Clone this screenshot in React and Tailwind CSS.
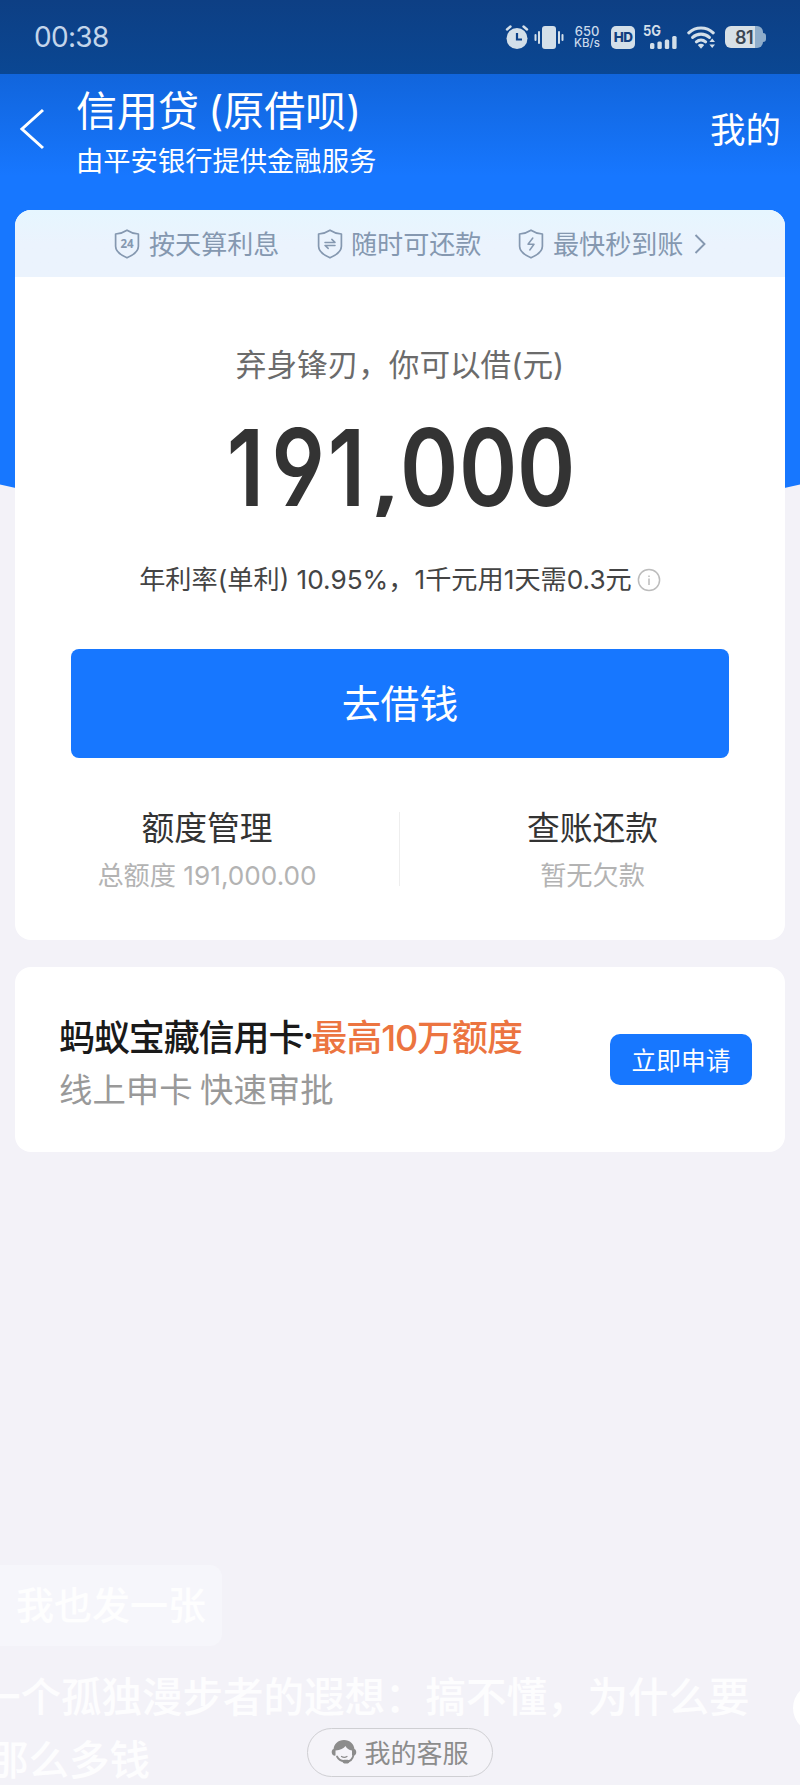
import React from "react";

function StatusBar() {
  return (
    <div className="flex h-[74px] items-center justify-between bg-gradient-to-b from-[#0d3f84] to-[#0a4793] pl-[34px] pr-[34px] font-['Inter','Noto_Sans_CJK_SC',sans-serif] text-[#c9d9ea]">
      <span className="text-[28px] leading-none tracking-[-0.7px] text-[#c3d5ea]">00:38</span>
      <div className="flex h-[26px] items-center">
        <svg width="24" height="25" viewBox="0 0 24 25">
          <circle cx="12" cy="13.5" r="10.5" fill="#d3dfe9" />
          <path d="M2 4.5 5.5 1.5M22 4.5 18.5 1.5" stroke="#d3dfe9" strokeWidth="2.4" strokeLinecap="round" />
          <path d="M12 8v6.5h5" fill="none" stroke="#0c4189" strokeWidth="2.2" />
        </svg>
        <svg className="ml-[5px]" width="30" height="25" viewBox="0 0 30 25">
          <rect x="8" y="1" width="14" height="23" rx="3" fill="#d3dfe9" />
          <path d="M5 7v11M25 7v11M1.5 10v5M28.5 10v5" stroke="#d3dfe9" strokeWidth="2" strokeLinecap="round" />
        </svg>
        <div className="ml-[9px] flex w-[28px] flex-col items-center text-[11.5px] font-medium leading-[12px]">
          <span className="text-[13px]">650</span>
          <span>KB/s</span>
        </div>
        <div className="ml-[10px] flex h-[23px] w-[24px] items-center justify-center rounded-[5px] bg-[#d3dfe9] text-[13.5px] font-extrabold tracking-[-0.6px] text-[#123f80]">
          HD
        </div>
        <svg className="ml-[8px] overflow-visible" width="35" height="26" viewBox="0 0 35 26">
          <text x="0" y="12" fontSize="14" fontWeight="700" fill="#d3dfe9" textLength="18" lengthAdjust="spacingAndGlyphs">5G</text>
          <g fill="#d3dfe9">
            <rect x="7" y="19" width="4.4" height="6" rx="1.5" />
            <rect x="14.4" y="17.5" width="4.4" height="7.5" rx="1.5" />
            <rect x="21.8" y="15.5" width="4.4" height="9.5" rx="1.5" />
            <rect x="29.2" y="12" width="4.4" height="13" rx="1.5" />
          </g>
        </svg>
        <svg className="ml-[9px]" width="29" height="24" viewBox="0 0 29 24">
          <g fill="none" stroke="#d3dfe9" strokeWidth="3.1" strokeLinecap="round">
            <path d="M1.8 7.8a18 18 0 0 1 24.4 0" />
            <path d="M5.6 12.4a12.4 12.4 0 0 1 16.8 0" />
            <path d="M9.4 16.8a7 7 0 0 1 9.2 0" />
          </g>
          <path d="M10.8 20a5 5 0 0 1 6.4 0L14 23.8z" fill="#d3dfe9" />
          <path d="m22.4 17 2.8-3.4 2.8 3.4zM22.4 19.6l2.8 3.4 2.8-3.4z" fill="#d3dfe9" />
        </svg>
        <div className="ml-[9px] flex h-[22px] w-[38px] items-center justify-center rounded-[6px] bg-gradient-to-r from-[#d7e0e6] from-80% to-[#8fadcb] to-80% text-[18px] font-semibold tracking-[-0.5px] text-[#3a4653]">
          81
        </div>
        <div className="h-[9px] w-[3px] rounded-r-[3px] bg-[#8fadcb]" />
      </div>
    </div>
  );
}

function Shield({ children }) {
  return (
    <svg width="26" height="30" viewBox="0 0 26 30" fill="none" stroke="#8598b0" strokeWidth="1.7" strokeLinejoin="round" strokeLinecap="round">
      <path d="M13 1.2C16 3.2 20 4.7 24.4 5v12.2c0 5.2-5 8.8-11.4 11.6C6.6 26 1.6 22.4 1.6 17.2V5C6 4.7 10 3.2 13 1.2Z" />
      {children}
    </svg>
  );
}

function Perks() {
  return (
    <div className="flex h-[67px] items-center rounded-t-[16px] bg-gradient-to-b from-[#e6f6ff] to-[#ebf3fd] to-50% pl-[99px] text-[26.1px] leading-none text-[#8598b0]">
      <Shield>
        <text x="13" y="18.6" textAnchor="middle" fontSize="11.5" fontWeight="700" fill="#8598b0" stroke="none" fontFamily="Open Sans, sans-serif">24</text>
      </Shield>
      <span className="ml-[9px] w-[131px] whitespace-nowrap">按天算利息</span>
      <span className="ml-[37px] flex">
        <Shield>
          <path d="M8 13.4h10l-3.2-3M18 16.4H8l3.2 3" strokeWidth="1.5" />
        </Shield>
      </span>
      <span className="ml-[8px] w-[131px] whitespace-nowrap">随时可还款</span>
      <span className="ml-[36px] flex">
        <Shield>
          <path d="M14.8 9 10 15.2h6L11.8 21" strokeWidth="1.5" />
        </Shield>
      </span>
      <span className="ml-[9px] w-[131px] whitespace-nowrap">最快秒到账</span>
      <svg className="ml-[10px]" width="12" height="20" viewBox="0 0 12 20" fill="none" stroke="#8598b0" strokeWidth="1.9">
        <path d="m1.5 1 9 9-9 9" />
      </svg>
    </div>
  );
}

function Glyph({ width, children }) {
  return (
    <span className={`flex justify-center ${width}`}>
      <span className="inline-block scale-x-[0.83]">{children}</span>
    </span>
  );
}

function Amount() {
  return (
    <div className="mt-[25px] flex h-[120px] items-baseline justify-center whitespace-nowrap font-['Inter'] text-[106.5px] font-semibold leading-[120px] text-[#333333] [font-feature-settings:'cv04']">
      <Glyph width="w-[42px]">1</Glyph>
      <Glyph width="w-[63px]">9</Glyph>
      <Glyph width="w-[34px]">1</Glyph>
      <span className="flex w-[37px] justify-center pl-[8px] font-['Open_Sans'] text-[86px] font-bold leading-none">,</span>
      <Glyph width="w-[58.5px]">0</Glyph>
      <Glyph width="w-[58.5px]">0</Glyph>
      <Glyph width="w-[58.5px]">0</Glyph>
    </div>
  );
}

function LoanCard() {
  return (
    <section className="flex h-[730px] flex-col items-center rounded-[16px] bg-white">
      <div className="w-full">
        <Perks />
      </div>
      <p className="mt-[66px] h-[40px] whitespace-nowrap text-[30.6px] leading-[40px] text-[#6b6b6b]">
        弃身锋刃，你可以借<span className="font-['Inter']">(</span>元<span className="font-['Inter']">)</span>
      </p>
      <Amount />
      <p className="mt-[34px] flex h-[36px] items-center whitespace-nowrap font-['Inter','Noto_Sans_CJK_SC',sans-serif] text-[26.2px] leading-[36px] text-[#444444]">
        年利率(单利) 10.95%，1千元用1天需0.3元
        <svg className="ml-[5px]" width="24" height="24" viewBox="0 0 24 24" fill="none" stroke="#bcbcbc" strokeWidth="1.5">
          <circle cx="12" cy="12" r="10.6" />
          <path d="M12 10.5v6.5M12 7.5v1.5" strokeWidth="1.5" />
        </svg>
      </p>
      <button className="mt-[51px] flex h-[109px] w-[658px] items-center justify-center rounded-[8px] bg-[#1777ff] pb-[4px] text-[38.8px] leading-none text-white">
        去借钱
      </button>
      <div className="mt-[46px] flex w-full items-stretch text-center">
        <div className="flex w-[384px] flex-col items-center">
          <h3 className="text-[32.8px] leading-[44px] text-[#333333]">额度管理</h3>
          <p className="mt-[10px] font-['Inter','Noto_Sans_CJK_SC',sans-serif] text-[26.2px] leading-[36px] text-[#b3b3b3]">
            总额度 191,000.00
          </p>
        </div>
        <div className="my-[8px] w-px bg-[#eeeeee]" />
        <div className="flex flex-1 flex-col items-center">
          <h3 className="text-[32.8px] leading-[44px] text-[#333333]">查账还款</h3>
          <p className="mt-[10px] font-['Inter','Noto_Sans_CJK_SC',sans-serif] text-[26.2px] leading-[36px] text-[#b3b3b3]">暂无欠款</p>
        </div>
      </div>
    </section>
  );
}

function CardPromo() {
  return (
    <section className="mt-[27px] flex h-[185px] items-center justify-between rounded-[16px] bg-white pl-[44px] pr-[33px]">
      <div className="whitespace-nowrap pt-[4px]">
        <h3 className="flex text-[36px] font-medium leading-[50px] tracking-[-1.1px] text-[#1a1a1a]">
          蚂蚁宝藏信用卡<span className="-ml-[1px] w-[9px] text-center font-['Inter'] font-bold tracking-normal">·</span>
          <span className="text-[#ec7440]">最高<span className="font-['Inter']">10</span>万额度</span>
        </h3>
        <p className="text-[33.4px] leading-[50px] text-[#999999]">线上申卡 快速审批</p>
      </div>
      <button className="flex h-[51px] w-[142px] items-center justify-center rounded-[10px] bg-[#1777ff] text-[24.7px] leading-none text-white">
        立即申请
      </button>
    </section>
  );
}

function AgentIcon() {
  return (
    <svg width="26" height="25" viewBox="0 0 26 25">
      <path d="M13 1C7 1 3 5 2.6 10 1 10.5.5 12 .8 14c.3 1.8 1.6 2.8 3.7 2.6V11.5c5-.3 8-2 10-4.5 1.2 2.5 3.5 4 6.5 4.5v5.1c2.5.2 4-1 4.200-2.700.2-1.900-.4-3.400-1.800-3.900C23 5 19 1 13 1Z" fill="#8c8c8c" />
      <path d="M6 17.5c1.5 3 4 4.5 7 4.5M22.5 16c-.8 4-3.5 6.5-7 6.8" fill="none" stroke="#8c8c8c" strokeWidth="1.8" strokeLinecap="round" />
      <rect x="11.5" y="20.8" width="7" height="3.6" rx="1.8" fill="#8c8c8c" />
      <path d="M10.5 17.5c1.5 1 4 1 5.5 0" fill="none" stroke="#8c8c8c" strokeWidth="1.2" strokeLinecap="round" />
    </svg>
  );
}

function ChatOverlay() {
  return (
    <div className="pointer-events-none absolute inset-x-0 top-[1565px] h-[220px] overflow-hidden font-medium text-white/85">
      <div className="flex h-[81px] w-[222px] items-center rounded-r-[12px] bg-[#f6f6fb] pb-[6px] pl-[16px] text-[38px] leading-none">
        我也发一张
      </div>
      <div className="-ml-[20px] mt-[17px] whitespace-nowrap text-[40.5px] leading-[63px]">
        <p>一个孤独漫步者的遐想：搞不懂，为什么要</p>
        <p className="ml-[8px]">那么多钱</p>
      </div>
      <div className="absolute left-[793px] top-[118px] h-[50px] w-[50px] rounded-full bg-white" />
    </div>
  );
}

export default function App() {
  return (
    <div className="relative flex h-[1785px] w-[800px] flex-col overflow-hidden bg-[#f3f2f8] font-['Noto_Sans_CJK_SC',sans-serif]">
      <header className="h-[530px] shrink-0 bg-[#1777ff] [clip-path:circle(1785px_at_50%_-1255px)]">
        <StatusBar />
        <div className="flex h-[136px] items-start bg-gradient-to-b from-[#1165dc] to-[#1777ff] to-75% text-white">
          <svg className="ml-[19px] mt-[34px]" width="26" height="42" viewBox="0 0 26 42" fill="none" stroke="currentColor" strokeWidth="3">
            <path d="M24 2 3 21l21 19" />
          </svg>
          <div className="ml-[31px] mt-[5px] whitespace-nowrap">
            <h1 className="text-[41px] leading-[58px]">
              信用贷 <span className="font-['Inter']">(</span>原借呗<span className="font-['Inter']">)</span>
            </h1>
            <p className="-mt-[1px] text-[27.3px] leading-[40px]">由平安银行提供金融服务</p>
          </div>
          <span className="ml-auto mr-[19px] mt-[29px] text-[35.5px] leading-[50px]">我的</span>
        </div>
      </header>
      <main className="relative -mt-[320px] px-[15px]">
        <LoanCard />
        <CardPromo />
      </main>
      <ChatOverlay />
      <footer className="relative mt-auto flex justify-center pb-[8px]">
        <button className="flex h-[49px] w-[186px] items-center justify-center gap-[7px] rounded-full border-[1.5px] border-[#cfcfd3] bg-[#f5f4f9] pb-[2px] text-[26px] leading-none text-[#8c8c8c]">
          <AgentIcon />
          我的客服
        </button>
      </footer>
    </div>
  );
}
